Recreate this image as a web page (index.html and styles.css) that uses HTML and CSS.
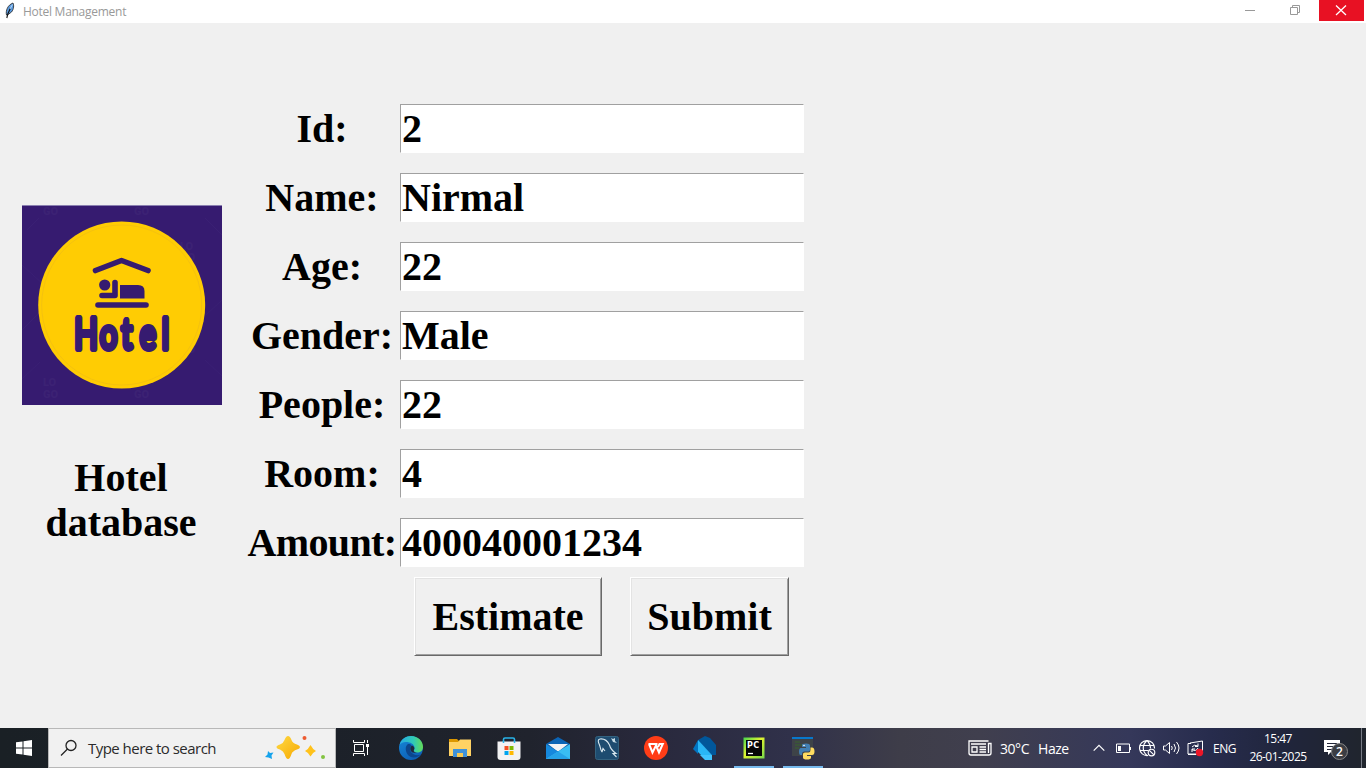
FILE: index.html
```html
<!DOCTYPE html>
<html lang="en">
<head>
<meta charset="utf-8">
<title>Hotel Management</title>
<link rel="stylesheet" href="styles.css">
</head>
<body>
<header class="titlebar">
  <svg class="feather" width="12" height="18" viewBox="0 0 12 18"><path d="M2.500 13C1.500 9 3.500 3 9 1C10 3 10 7 7.500 10L3.500 13Z" fill="#5b9be0" stroke="#222" stroke-width=".8"/><path d="M6.500 6L3.800 12L2.800 16" fill="none" stroke="#111" stroke-width="1.100"/><path d="M8.500 2.500L6 7" stroke="#b5d8f8"/></svg>
  <span class="caption">Hotel Management</span>
  <div class="controls">
    <svg width="45" height="21" viewBox="0 0 45 21"><path d="M16 10.500H26" stroke="#999"/></svg>
    <svg width="45" height="21" viewBox="0 0 45 21"><path d="M16.500 7.500H23.500V14.500H16.500ZM18.500 7V5.500H25.500V12.500H24" fill="none" stroke="#999"/></svg>
    <svg class="close" width="45" height="21" viewBox="0 0 45 21"><path d="M17 5.500L27 15M27 5.500L17 15" stroke="#fff" stroke-width="1.300"/></svg>
  </div>
</header>
<main class="window">
  <section class="brand">
    <svg class="logo" width="200" height="200" viewBox="0 0 200 200">
      <rect width="200" height="200" fill="#361b70"/>
      <path d="M0 .5H200" stroke="#8a80b0"/>
      <path d="M5 25L17 13M183 13L200 30M0 60L22 80M0 125L18 107M184 110L200 95M0 174L18 157M183 155L200 171" stroke="#3a2074"/>
      <g class="watermark"><text x="21" y="10">GO</text><text x="112" y="10">GO</text><text x="158" y="45">LO</text><text x="158" y="56">GO</text><text x="158" y="148">GO</text><text x="21" y="181">LO</text><text x="21" y="193">GO</text><text x="112" y="181">LO</text><text x="112" y="193">GO</text></g>
      <circle cx="99.700" cy="100" r="83.500" fill="#ffcc03"/>
      <circle cx="99.700" cy="100" r="80" fill="none" stroke="#edbb18" stroke-width=".6"/>
      <g fill="none" stroke="#361b70" stroke-linecap="round" stroke-linejoin="round">
        <path d="M73.500 65.500L99.500 55.500L126 65.500" stroke-width="5.600"/>
        <path d="M76 100H124" stroke-width="5.600"/>
        <path d="M80 90.500H93V77.500" stroke-width="5.600"/>
      </g>
      <circle cx="82.700" cy="80" r="5.600" fill="#361b70"/>
      <path d="M98 80H116Q122.500 80 122.500 86V93.500H98Z" fill="#361b70"/>
      <text class="logo-word" transform="scale(.72 1)" x="72.600 108 138 163.500 194" y="144">Hotel</text>
    </svg>
    <h1 class="brand-name">Hotel<br>database</h1>
  </section>
  <form class="entry-form">
    <div class="row"><label for="id">Id:</label><input id="id" value="2"></div>
    <div class="row"><label for="name">Name:</label><input id="name" value="Nirmal"></div>
    <div class="row"><label for="age">Age:</label><input id="age" value="22"></div>
    <div class="row"><label for="gender">Gender:</label><input id="gender" value="Male"></div>
    <div class="row"><label for="people">People:</label><input id="people" value="22"></div>
    <div class="row"><label for="room">Room:</label><input id="room" value="4"></div>
    <div class="row"><label for="amount" class="wide">Amount:</label><input id="amount" value="400040001234"></div>
    <div class="actions"><button type="button" class="estimate">Estimate</button><button type="button" class="submit">Submit</button></div>
  </form>
</main>
<footer class="taskbar">
  <div class="start"><svg width="16" height="16" viewBox="0 0 16 16"><path d="M0 2.300L6.500 1.400V7.500H0ZM7.500 1.200L16 0V7.500H7.500ZM0 8.500H6.500V14.600L0 13.700ZM7.500 8.500H16V16L7.500 14.800Z" fill="#fff"/></svg></div>
  <div class="search">
    <svg width="18" height="18" viewBox="0 0 18 18" fill="none" stroke="#222" stroke-width="1.300"><circle cx="11" cy="6.500" r="5"/><path d="M7.500 10L1 16.500"/></svg>
    <span class="search-text">Type here to search</span>
    <svg class="sparkles" width="64" height="28" viewBox="0 0 64 28">
      <defs><linearGradient id="gold" x1="0" y1="0" x2="1" y2="1"><stop stop-color="#ffda45"/><stop offset="1" stop-color="#f6a800"/></linearGradient></defs>
      <path d="M24 2Q26 2 27.500 6Q28.500 9 33 10.500Q36 11.500 36 13Q36 14.500 33 15.500Q28.500 17 27.500 20Q26 25 24 25Q22 25 20.500 20Q19.500 17 16 15.500Q12.500 14.500 12.500 13Q12.500 11.500 16 10.500Q19.500 9 20.500 6Q22 2 24 2Z" fill="url(#gold)"/>
      <path d="M46.500 11Q48.500 15 52 17Q48.500 18.500 46.500 22.500Q44.500 18.500 41 17Q44.500 15 46.500 11Z" fill="#ffc21b"/>
      <path d="M4 17L6 19L9.500 18.500L7.500 21.500L8 25L4.500 23.500L1 23L3.500 20.500Z" fill="#16a3ec"/>
      <circle cx="40.500" cy="4" r="2" fill="#ed5b31"/><circle cx="59" cy="23" r="2" fill="#82c341"/>
    </svg>
  </div>
  <div class="taskview"><svg width="18" height="18" viewBox="0 0 18 18" fill="none" stroke="#fff"><path d="M2.500 5.500H11.500V12.500H2.500ZM1.500 1V3.500H12.500V1M1.500 17V14.500H12.500V17M15.500 1V4M15.500 8V16"/><path d="M14 5H17V8H14Z" fill="#fff" stroke="none"/></svg></div>
  <nav class="apps">
    <div class="app"><svg width="24" height="24" viewBox="0 0 24 24"><defs><linearGradient id="ea"><stop stop-color="#25a9e6"/><stop offset=".6" stop-color="#31cbb5"/><stop offset="1" stop-color="#65dc54"/></linearGradient><linearGradient id="eb" x2=".6" y2="1"><stop stop-color="#1688d8"/><stop offset="1" stop-color="#0d5fb5"/></linearGradient></defs><circle cx="12" cy="12" r="12" fill="url(#eb)"/><path d="M.5 9C2 3 7 0 12 0C19 0 24 5 24 11C24 16 19 17.500 15.500 16C13.500 15 15.500 14 15.500 12C15.500 8 11 6 7 6C4 6 2 7 .5 9Z" fill="url(#ea)"/><path d="M9 8C6 10 6 15 9 19C12 22.500 18 22 22 18.500C18 20 14 19 12 16C10.500 13.500 11 11 12.500 9.500C11.500 8.200 10.500 7.800 9 8Z" fill="#0c468d"/><path d="M13 9.500C10.500 11 11 15 13.500 16.500L18 17C15 16 14 15 15 14C16 12 15 10 13 9.500Z" fill="#20283b"/></svg></div>
    <div class="app"><svg width="24" height="24" viewBox="0 0 24 24"><path d="M1 3H9L11 5V8H1Z" fill="#dc9700"/><path d="M1 6H10L12 3.500H23V20H1Z" fill="#ffd264"/><path d="M5 21V13H19V21H15V17H9V21Z" fill="#3e91d9"/><path d="M9 17H15V21H9Z" fill="#f6c851"/></svg></div>
    <div class="app"><svg width="24" height="24" viewBox="0 0 24 24"><path d="M6.500 6V3.500Q6.500 2 8 2H16Q17.500 2 17.500 3.500V6" fill="none" stroke="#29b4e8" stroke-width="1.600"/><path d="M.5 5.500H23.500V21Q23.500 24 20.500 24H3.500Q.5 24 .5 21Z" fill="#f2f2f3"/><path d="M6.500 5V7M17.500 5V7" stroke="#29b4e8" stroke-width="1.500"/><path d="M7.500 10H11.500V14H7.500Z" fill="#f25022"/><path d="M12.500 10H16.500V14H12.500Z" fill="#7fba00"/><path d="M7.500 15H11.500V19H7.500Z" fill="#00a4ef"/><path d="M12.500 15H16.500V19H12.500Z" fill="#ffb900"/></svg></div>
    <div class="app"><svg width="24" height="24" viewBox="0 0 24 24"><path d="M0 8L12 1L24 8L12 16Z" fill="#0b64b5"/><path d="M2 8H22L13 15H11Z" fill="#f1f2f4"/><path d="M0 8L24 23H0Z" fill="#1688dc"/><path d="M24 8V23H0Z" fill="#39bdf2"/><path d="M0 23L12 15.500L24 23Z" fill="#26a2e7"/></svg></div>
    <div class="app"><svg width="24" height="24" viewBox="0 0 24 24"><rect x=".5" y=".5" width="23" height="23" rx="2" fill="#1e4c70" stroke="#33627f"/><path d="M7 16C5 13 5.500 11 4.500 9C3 6 2.500 3.500 5 3C9 2.500 12.500 5 14.500 9C15.500 13 17.500 15 21 17.500L18 17.500L21.500 21M7 16L8 12.500L10 15" fill="none" stroke="#dae8ef" stroke-width="1.100"/><path d="M16 2L18 3L20 2V5L22 7L18 6L17 4Z" fill="#c6dbe5"/></svg></div>
    <div class="app"><svg width="24" height="24" viewBox="0 0 24 24"><circle cx="12" cy="12" r="12" fill="#ff3d17"/><path d="M4.500 8H13.500M5 8L8.500 16.500L12 9.500L15 16.500L18.800 8H15.500L14 11" fill="none" stroke="#fff" stroke-width="2"/></svg></div>
    <div class="app"><svg width="24" height="24" viewBox="0 0 24 24"><path d="M5 4L12 0L17 2L23 9V19H19L5 5Z" fill="#01579b"/><path d="M5 4V16L13 24H19V19Z" fill="#29b6f6"/><path d="M5 4L0 13L5 18Z" fill="#0175c2"/><path d="M5 17L12 24H19V19H7Z" fill="#40c4ff"/></svg></div>
    <div class="app active"><svg width="24" height="24" viewBox="0 0 24 24"><defs><linearGradient id="pc" x2="1" y2="1"><stop stop-color="#45d64f"/><stop offset=".45" stop-color="#dff330"/><stop offset="1" stop-color="#74d74a"/></linearGradient></defs><path d="M1.500 1.500H22.500V22.500H1.500Z" fill="url(#pc)"/><path d="M4 4H20V20H4Z" fill="#060606"/><text class="pc-text" x="5" y="12" textLength="12">PC</text><path d="M6 17.500H11" stroke="#fff" stroke-width="1.300"/></svg></div>
    <div class="app active"><svg width="24" height="24" viewBox="0 0 24 24"><path d="M1 1H22V20H1Z" fill="#3e4348"/><path d="M1 1H22V3H1Z" fill="#0878cc"/><path d="M4 6H9M4 9H11M4 12H8" stroke="#39642d"/><path d="M11 11V9Q11 7.500 15 7.500Q19 7.500 19 9.500V14Q19 15.500 17 15.500H13Q11 15.500 11 18V19H9.500Q8 19 8 15.500Q8 12 10 12H15V11Z" fill="#427fb2"/><path d="M19.500 11.500H21Q23.500 11.500 23.500 15.500Q23.500 19 21 19H16V20H20V21.500Q20 23.500 16 23.500Q12 23.500 12 21.500V18Q12 16.500 14 16.500H17.500Q19.500 16.500 19.500 14Z" fill="#ffdc60"/><circle cx="13" cy="9.500" r=".8" fill="#fff"/></svg></div>
  </nav>
  <div class="tray">
    <svg class="news" width="24" height="16" viewBox="0 0 24 16" fill="none" stroke="#fff" stroke-width="1.300"><path d="M20.500 1H1V13Q1 15 3 15H21Q23 15 23 13V3.500H20.500V13M3 4H18M4 7H9V12H4ZM11.500 7H18M11.500 9.500H18M11.500 12H18"/></svg>
    <span class="weather"><span>30°C</span><span>Haze</span></span>
    <svg class="chevron" width="12" height="8" viewBox="0 0 12 8"><path d="M.7 6.700L6 1.400L11.300 6.700" fill="none" stroke="#fff" stroke-width="1.200"/></svg>
    <svg class="battery" width="15" height="10" viewBox="0 0 15 10"><path d="M.5 1H13.500V9.500H.5Z" fill="none" stroke="#fff"/><path d="M14 4H15V7H14ZM2 3H5V8H2Z" fill="#fff"/></svg>
    <svg class="globe" width="17" height="17" viewBox="0 0 17 17" fill="none" stroke="#fff" stroke-width="1.150"><path d="M9 15.500A7.500 7.500 0 1 1 15.500 8.500M1.500 5.500H14.500M1.500 10.500H9M8 .5C3 5 3 11 8 15.500M8 .5C10.500 3 11.500 6 11.500 8.500"/><circle cx="12.500" cy="12.500" r="3.300"/><path d="M10.300 10.300L14.700 14.700"/></svg>
    <svg class="volume" width="18" height="14" viewBox="0 0 18 14" fill="none" stroke="#fff"><path d="M.5 5H2.500L6.500 1.500V12.500L2.500 9H.5ZM8.500 5Q10 7 8.500 9M11 3Q14 7 11 11M13.500 1Q18.500 7 13.500 13"/></svg>
    <svg class="update" width="18" height="18" viewBox="0 0 18 18"><path d="M3 4L15.500 2V14M1 4.500V15H10M1 15.500H9M1 4.500H4" fill="none" stroke="#fff"/><path d="M5 8Q7 5 11 7M11 4.500V7.500H8M11 9Q9 13 5 10.500M5 13V10H8" fill="none" stroke="#fff"/><circle cx="12.500" cy="13.500" r="3.700" fill="#ec1628"/></svg>
    <span class="language">ENG</span>
    <div class="clock"><span class="time">15:47</span><span class="date">26-01-2025</span></div>
    <div class="notifications"><svg width="16" height="16" viewBox="0 0 16 16"><path d="M0 0H16V12H7L4 15V12H0Z" fill="#fff"/><path d="M3 3.500H13M3 6.500H13M3 9.500H9" stroke="#222638"/></svg><span class="badge">2</span></div>
    <span class="show-desktop"></span>
  </div>
</footer>
</body>
</html>
```
FILE: styles.css
```css
* { box-sizing: border-box; }
body { margin: 0; width: 1366px; height: 768px; overflow: hidden; display: flex; flex-direction: column; background: #f0f0f0; font-family: "Open Sans", sans-serif; }
svg { display: block; flex: none; }

.titlebar { height: 23px; flex: none; display: flex; background: #fff; }
.feather { margin: 2px 7px 0 4px; }
.caption { font-size: 12px; line-height: 23px; letter-spacing: -.27px; color: #999; white-space: nowrap; }
.controls { display: flex; margin: 0 2px 0 auto; }
.close { background: #e81123; }

.window { flex: 1; display: flex; font: bold 40px/45px "Liberation Serif", serif; color: #000; }
.brand { width: 244px; padding: 182px 0 0 22px; }
.brand-name { width: 200px; margin: 50px 0 0 -1px; font: inherit; text-align: center; }
.watermark { font: 900 11px/1 Roboto, sans-serif; fill: #3c2274; }
.logo-word { font: 400 43px Lato, sans-serif; fill: #361b70; stroke: #361b70; stroke-width: 6px; stroke-linejoin: round; }
.entry-form { width: 560px; padding-top: 81px; }
.row { display: grid; grid-template-columns: 156px 404px; height: 49px; margin-bottom: 20px; }
.row label { text-align: center; line-height: 49px; white-space: nowrap; }
.row .wide { letter-spacing: -.6px; }
.row input { width: 404px; height: 49px; padding: 0 0 0 1px; border: 1px solid; border-color: #a0a0a0 #fff #fff #a0a0a0; border-radius: 0; outline: 0; background: #fff; color: #000; font: inherit; }
.actions { display: flex; gap: 28px; margin: -10px 0 0 170px; }
.actions button { height: 79px; padding: 0; font: inherit; color: #000; background: #f0f0f0; border: 1px solid; border-color: #fff #696969 #696969 #fff; border-radius: 0; box-shadow: inset 1px 1px #e3e3e3, inset -1px -1px #a0a0a0; }
.estimate { width: 188px; }
.submit { width: 159px; }

.taskbar { height: 40px; flex: none; display: flex; color: #fff; background: linear-gradient(90deg, #1a2025 0, #1c2129 330px, #20232d 530px, #29293d 660px, #30314a 790px, #3e3d49 900px, #403f4e 980px, #35385a 1130px, #272c4d 1210px, #20253b 1290px, #20252d 1366px); }
.start { width: 48px; display: grid; place-items: center; }
.search { width: 288px; display: flex; align-items: center; padding-left: 11px; border: 1px solid #b8b8b8; background: #f1f1f1; }
.search-text { width: 164px; margin-left: 10px; color: #2b2b2b; font-size: 15px; letter-spacing: -.53px; white-space: nowrap; }
.sparkles { margin-left: 12px; }
.taskview { width: 50px; display: grid; place-items: center; }
.apps { display: flex; }
.app { width: 49px; display: grid; place-items: center; }
.app.active { background: linear-gradient(#76b9ed, #76b9ed) 5px 100% / 40px 2px no-repeat; }
.pc-text { font: bold 8px "DejaVu Sans", sans-serif; fill: #fff; }
.tray { flex: 1; display: flex; align-items: center; padding-left: 141px; }
.weather { width: 80px; margin-left: 8px; display: flex; gap: 9px; font-size: 14px; letter-spacing: -.45px; white-space: nowrap; }
.chevron { margin-left: 13px; }
.battery { margin-left: 11px; }
.globe { margin-left: 8px; }
.volume { margin-left: 7px; }
.update { margin-left: 6px; }
.language { width: 27px; margin-left: 8px; font-size: 12px; letter-spacing: -.45px; }
.clock { width: 64px; margin-left: 6px; display: flex; flex-direction: column; align-items: center; font-size: 12px; line-height: 18px; letter-spacing: -.55px; white-space: nowrap; }
.notifications { position: relative; width: 24px; height: 24px; margin-left: 14px; padding-top: 4px; }
.badge { position: absolute; left: 7px; top: 7px; width: 17px; height: 17px; border: 1px solid #888; border-radius: 50%; background: #3b3d43; font-size: 12px; font-weight: 600; line-height: 15px; text-align: center; }
.show-desktop { width: 1px; height: 40px; margin-left: auto; margin-right: 4px; background: #777b85; }
```
